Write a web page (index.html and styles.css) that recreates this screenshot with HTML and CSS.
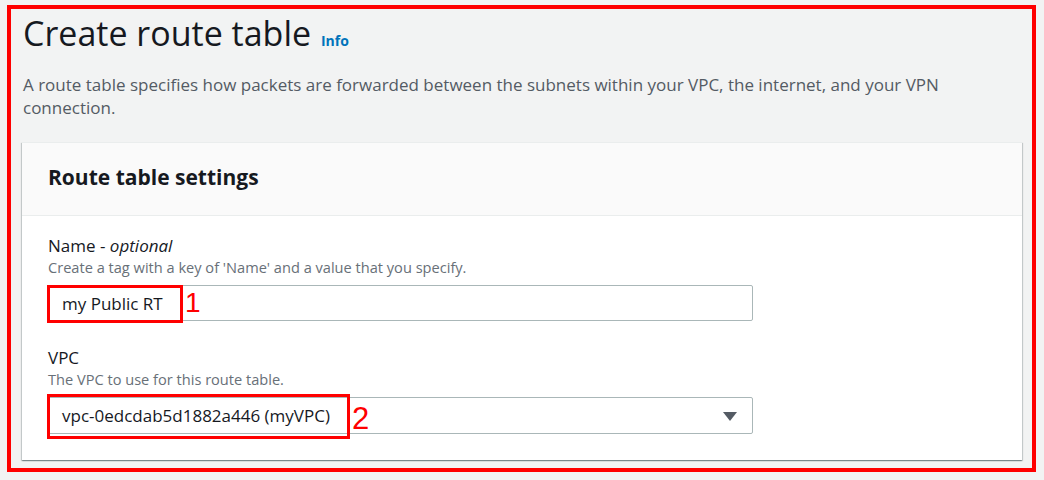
FILE: index.html
```html
<!DOCTYPE html>
<html lang="en">
<head>
<meta charset="utf-8">
<title>Create route table</title>
<link rel="stylesheet" href="styles.css">
</head>
<body>
<div class="frame">
  <h1 class="title">Create route table <a class="info" href="#">Info</a></h1>
  <p class="desc">A route table specifies how packets are forwarded between the subnets within your VPC, the internet, and your VPN connection.</p>
  <section class="card">
    <header class="card-head"><h2>Route table settings</h2></header>
    <div class="card-body">
      <div class="field">
        <div class="label">Name - <i>optional</i></div>
        <div class="hint">Create a tag with a key of 'Name' and a value that you specify.</div>
        <div class="control input">
          <span class="value">my Public RT</span>
          <span class="mark-box box1"></span>
          <span class="mark num1">1</span>
        </div>
      </div>
      <div class="field field-vpc">
        <div class="label">VPC</div>
        <div class="hint">The VPC to use for this route table.</div>
        <div class="control select">
          <span class="value">vpc-0edcdab5d1882a446 (myVPC)</span>
          <span class="caret"></span>
          <span class="mark-box box2"></span>
          <span class="mark num2">2</span>
        </div>
      </div>
    </div>
  </section>
</div>
</body>
</html>
```
FILE: styles.css
```css
* { box-sizing: border-box; }
html, body { margin: 0; padding: 0; }
body {
  background: #f2f3f3;
  font-family: "Open Sans", "Noto Sans", sans-serif;
  color: #16191f;
}
.frame {
  margin: 5px 0 0 7px;
  width: 1029px;
  height: 467px;
  border: 4px solid #ff0000;
  padding: 2px 9px 0 11px;
}
.title {
  margin: 0;
  padding-left: 1px;
  font-size: 34px;
  line-height: 44px;
  font-weight: 400;
  color: #16191f;
}
.info {
  margin-left: 1px;
  font-size: 14px;
  font-weight: 700;
  color: #0073bb;
  text-decoration: none;
}
.desc {
  margin: 10px 0 0;
  padding-left: 1px;
  font-size: 17px;
  line-height: 23px;
  color: #545b64;
}
.card {
  margin-top: 23px;
  width: 1000px;
  background: #fff;
  border-top: 1px solid #eaeded;
  box-shadow: 0 1px 1px 0 rgba(0,28,36,.3), 1px 1px 1px 0 rgba(0,28,36,.15), -1px 1px 1px 0 rgba(0,28,36,.15);
}
.card-head {
  background: #fafafa;
  border-bottom: 1px solid #eaeded;
  padding: 20px 26px 24px;
}
.card-head h2 {
  margin: 0;
  font-size: 21px;
  line-height: 28px;
  font-weight: 700;
  color: #16191f;
}
.card-body {
  padding: 19px 26px 26px;
}
.field-vpc { margin-top: 26px; }
.label {
  font-size: 17px;
  line-height: 22px;
  color: #16191f;
}
.hint {
  font-size: 14.6px;
  line-height: 20px;
  color: #687078;
}
.control {
  position: relative;
  margin: 8px 0 0 -1px;
  width: 706px;
  height: 36px;
  border: 1px solid #aab7b8;
  border-radius: 2px;
  background: #fff;
  display: flex;
  align-items: center;
  padding-left: 14px;
}
.select { height: 37px; }
.value {
  font-size: 17px;
  color: #16191f;
}
.caret {
  position: absolute;
  right: 15px;
  top: 14px;
  width: 0;
  height: 0;
  border-left: 7px solid transparent;
  border-right: 7px solid transparent;
  border-top: 9px solid #545b64;
}
.mark-box {
  position: absolute;
  border: 3px solid #ff0000;
}
.box1 {
  left: -1px;
  top: -1px;
  width: 136px;
  height: 38px;
}
.box2 {
  left: -1px;
  top: -4px;
  width: 303px;
  height: 45px;
}
.mark {
  position: absolute;
  font-family: "Liberation Sans", Arial, sans-serif;
  color: #ff0000;
  font-weight: 400;
}
.num1 {
  left: 137px;
  top: 0;
  font-size: 28px;
  line-height: 34px;
}
.num2 {
  left: 304px;
  top: 3px;
  font-size: 31px;
  line-height: 36px;
}
```
